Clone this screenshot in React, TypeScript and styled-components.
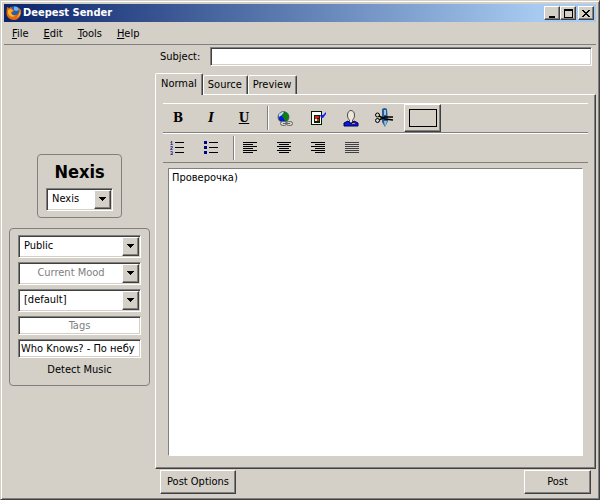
import React from "react";
import styled, { createGlobalStyle, css } from "styled-components";

const face = "#d4d0c8";
const shade = "#808080";
const dark = "#404040";
const uiFont = `"DejaVu Sans Condensed", "DejaVu Sans", sans-serif`;

const Global = createGlobalStyle`
  * { box-sizing: border-box; }
  body { margin: 0; background: ${face}; }
  button, input, select, textarea { font: inherit; color: inherit; margin: 0; border-radius: 0; }
`;

const raised = css`
  border: 1px solid;
  border-color: #fff ${dark} ${dark} #fff;
  box-shadow: inset -1px -1px ${shade};
`;

const sunken = css`
  border: 1px solid;
  border-color: ${shade} #fff #fff ${shade};
  box-shadow: inset 1px 1px ${dark}, inset -1px -1px ${face};
`;

const Window = styled.div`
  display: flex;
  flex-direction: column;
  min-height: 100vh;
  padding: 2px;
  background: ${face};
  color: #000;
  font: 11px/14px ${uiFont};
  border: 1px solid;
  border-color: ${face} ${dark} ${dark} ${face};
  box-shadow: inset 1px 1px #fff, inset -1px -1px ${shade};
`;

const TitleBar = styled.header`
  display: flex;
  align-items: center;
  height: 18px;
  margin: 1px 1px 0;
  padding: 0 2px;
  background: linear-gradient(to right, #0a246a, #a6caf0 90%);
`;

const Title = styled.h1`
  flex: 1;
  margin: 0 0 0 1px;
  color: #fff;
  font-size: 11px;
  line-height: 16px;
  font-weight: bold;
`;

const CaptionButton = styled.button<{ $apart?: boolean }>`
  ${raised}
  display: grid;
  place-items: center;
  width: 16px;
  height: 14px;
  padding: 0;
  background: ${face};
  margin-left: ${(p) => (p.$apart ? 2 : 0)}px;
`;

const MenuBar = styled.nav`
  display: flex;
  align-items: center;
  gap: 15px;
  height: 23px;
  margin: 0 1px;
  padding: 2px 8px 0;
  border-bottom: 1px solid ${shade};
`;

const MenuItem = styled.button`
  padding: 0;
  border: 0;
  background: none;
`;

const Body = styled.div`
  display: flex;
  flex: 1;
`;

const Sidebar = styled.aside`
  display: flex;
  flex-direction: column;
  align-items: center;
  justify-content: center;
  gap: 10px;
  width: 152px;
  padding-bottom: 3px;
  padding-left: 1px;
`;

const Group = styled.section<{ $wide?: boolean }>`
  display: flex;
  flex-direction: column;
  align-items: stretch;
  gap: 4px;
  width: ${(p) => (p.$wide ? 141 : 85)}px;
  padding: ${(p) => (p.$wide ? "6px 8px 7px" : "5px 8px 6px")};
  border: 1px solid ${shade};
  border-radius: 4px;
`;

const Account = styled.h2`
  margin: 0;
  font: bold 18px/24px ${uiFont};
  text-align: center;
`;

const Combo = styled.div`
  ${sunken}
  display: flex;
  position: relative;
  height: 23px;
  padding: 1px;
  background: #fff;
`;

const Select = styled.select`
  flex: 1;
  min-width: 0;
  padding: 0 20px 0 4px;
  border: 0;
  appearance: none;
  background: transparent;
`;

const ComboInput = styled.input`
  flex: 1;
  min-width: 0;
  padding: 0;
  border: 0;
  text-align: center;
  background: transparent;
  &::placeholder { color: ${shade}; opacity: 1; }
`;

const Arrow = styled.span`
  ${raised}
  position: absolute;
  top: 1px;
  right: 1px;
  bottom: 1px;
  display: grid;
  place-items: center;
  width: 17px;
  background: ${face};
  pointer-events: none;
`;

const ArrowButton = styled.button`
  ${raised}
  display: grid;
  place-items: center;
  width: 17px;
  padding: 0;
  background: ${face};
`;

const TextField = styled.input<{ $centered?: boolean }>`
  ${sunken}
  width: 100%;
  min-width: 0;
  height: 19px;
  padding: 0 2px;
  background: #fff;
  text-align: ${(p) => (p.$centered ? "center" : "left")};
  &::placeholder { color: ${shade}; opacity: 1; }
`;

const DetectButton = styled.button`
  align-self: center;
  padding: 0;
  margin: 1px 0;
  border: 0;
  background: none;
`;

const Main = styled.main`
  display: flex;
  flex: 1;
  flex-direction: column;
  min-width: 0;
  padding: 2px 1px 3px 0;
`;

const SubjectRow = styled.div`
  display: flex;
  align-items: center;
  padding: 0 4px 0 5px;
`;

const SubjectLabel = styled.label`
  flex: none;
  width: 50px;
`;

const Tabs = styled.div`
  display: flex;
  align-items: flex-end;
  margin-top: 7px;
`;

const Tab = styled.button<{ $active?: boolean }>`
  position: relative;
  z-index: ${(p) => (p.$active ? 1 : 0)};
  height: ${(p) => (p.$active ? 22 : 19)}px;
  padding: ${(p) => (p.$active ? "0 5px 2px" : "0 5px 0 4px")};
  margin-bottom: ${(p) => (p.$active ? -1 : 0)}px;
  background: ${face};
  border: 1px solid;
  border-color: #fff ${dark} transparent #fff;
  border-bottom-width: 0;
  border-radius: 2px 2px 0 0;
  box-shadow: inset -1px 0 ${shade};
`;

const Panel = styled.div`
  display: flex;
  flex: 1;
  flex-direction: column;
  padding: 8px 7px 12px;
  ${raised}
`;

const Toolbar = styled.div`
  display: flex;
  align-items: center;
  height: 30px;
  border-top: 1px solid #fff;
  border-bottom: 1px solid ${shade};
`;

const Tool = styled.button<{ $narrow?: boolean }>`
  display: grid;
  flex: none;
  place-items: center;
  width: ${(p) => (p.$narrow ? 28 : 30)}px;
  height: 26px;
  margin-right: ${(p) => (p.$narrow ? 6 : 3)}px;
  padding: 0;
  border: 0;
  background: none;
`;

const Glyph = styled.span<{ $italic?: boolean; $underline?: boolean }>`
  font: bold 12px/14px "DejaVu Serif", serif;
  font-style: ${(p) => (p.$italic ? "italic" : "normal")};
  text-decoration: ${(p) => (p.$underline ? "underline" : "none")};
`;

const Separator = styled.span<{ $narrow?: boolean }>`
  width: 2px;
  height: 24px;
  margin: 0 1px 0 ${(p) => (p.$narrow ? 2 : 5)}px;
  border-left: 1px solid ${shade};
  border-right: 1px solid #fff;
`;

const ColorButton = styled.button`
  ${raised}
  display: grid;
  place-items: center;
  width: 37px;
  height: 28px;
  margin-left: 2px;
  padding: 0;
  background: ${face};
`;

const Swatch = styled.span`
  width: 28px;
  height: 18px;
  border: 1px solid #000;
`;

const Editor = styled.textarea`
  flex: 1;
  margin: 5px 5px 0;
  padding: 2px 3px;
  border: 1px solid;
  border-color: ${shade} #fff #fff ${shade};
  background: #fff;
  resize: none;
  outline: 0;
`;

const Footer = styled.footer`
  display: flex;
  justify-content: space-between;
  padding: 1px 5px 0;
`;

const PushButton = styled.button<{ $wide?: boolean }>`
  ${raised}
  width: ${(p) => (p.$wide ? 76 : 67)}px;
  height: 24px;
  padding: 0;
  background: ${face};
`;

const Drawing = styled.svg`
  display: block;
  flex: none;
`;

const Down = () => (
  <Drawing width="7" height="4" shapeRendering="crispEdges">
    <path d="M0 0h7v1H0zM1 1h5v1H1zM2 2h3v1H2zM3 3h1v1H3z" />
  </Drawing>
);

const Firefox = () => (
  <Drawing width="16" height="16" viewBox="0 0 16 16">
    <circle cx="8.5" cy="7" r="6" fill="#2860b0" />
    <path d="M8 2c3-1 5 1 5 3l-3 1-2-1z" fill="#69b8e8" />
    <path d="M1 2l2 1 2-1 1 2 2 1-1 2-2 1c1 3 5 3 7 1 2-2 1-4 0-6 2 0 2 1 2 2l1-1c1 6-2 11-7 11C3 15 0 11 .5 7z" fill="#e66a0c" />
    <path d="M2 5l3-1 2 2-2 1c0 3 3 4 5 3-3 3-7 2-8-2z" fill="#ffb52a" />
    <path d="M14 6c1 4-2 7-6 7 4 0 5-3 6-7z" fill="#ffd34d" />
  </Drawing>
);

const Numbered = () => (
  <Drawing width="14" height="16" shapeRendering="crispEdges">
    <g fill="#000080" fontFamily="Liberation Mono" fontSize="5" fontWeight="bold">
      <text x="0" y="5">1</text>
      <text x="0" y="10">2</text>
      <text x="0" y="15">3</text>
    </g>
    <path d="M5 2h9v1H5zM5 7h9v1H5zM5 12h9v1H5z" />
  </Drawing>
);

const Bulleted = () => (
  <Drawing width="14" height="16" shapeRendering="crispEdges">
    <path fill="#000080" d="M0 1h3v3H0zM0 6h3v3H0zM0 11h3v3H0z" />
    <path d="M5 2h9v1H5zM5 7h9v1H5zM5 12h9v1H5z" />
  </Drawing>
);

const shortLineStart: Record<string, number> = { left: 0, center: 2, right: 4, justify: 0 };

const Align = ({ kind }: { kind: string }) => (
  <Drawing width="14" height="12" shapeRendering="crispEdges" fill={kind === "justify" ? dark : "#000"}>
    {[0, 1, 2, 3, 4, 5].map((i) => {
      const short = i % 2 === 1;
      return (
        <rect
          key={i}
          x={short ? shortLineStart[kind] : 0}
          y={i * 2}
          width={short && kind !== "justify" ? 10 : 14}
          height="1"
        />
      );
    })}
  </Drawing>
);

const LinkIcon = () => (
  <Drawing width="16" height="17" viewBox="0 0 16 17">
    <circle cx="6.5" cy="7" r="5.5" fill="#0818e0" stroke="#707878" />
    <path d="M6 3l3-1 2 2 1 3-1 3-2 1-2-1V8L5 7z" fill="#0a8010" />
    <path d="M2 4l3-2 2 0-2 3-3 2z" fill="#c4dce4" />
    <path d="M1 8l2 3-1 0z" fill="#0a8010" />
    <rect x="3.5" y="11.5" width="6" height="4" rx="2" fill={face} stroke="#686868" />
    <rect x="9.5" y="11.5" width="6" height="4" rx="2" fill={face} stroke="#686868" />
    <path d="M6 13.5h7" stroke="#686868" />
  </Drawing>
);

const ImageIcon = () => (
  <Drawing width="16" height="16" viewBox="0 0 16 16">
    <path d="M1 1h11v14H1z" fill="#001c00" />
    <path d="M2 2h9v12H2z" fill="#fff" />
    <path d="M4 5h6v8H4z" fill="#002800" shapeRendering="crispEdges" />
    <path d="M5 6h4v2H5zM7 9h2v2H7zM5 8h2v1H5z" fill="#f01818" shapeRendering="crispEdges" />
    <path d="M5 9h2v2H5z" fill="#e8f0e8" shapeRendering="crispEdges" />
    <path d="M10 5l3 0 3-3v2l-3 4h-2z" fill="#1020e8" />
  </Drawing>
);

const UserIcon = () => (
  <Drawing width="16" height="17" viewBox="0 0 16 17">
    <path d="M4.500 5c0-6 7-6 7 0 0 3-1 4-2 5v3h-3v-3c-1-1-2-2-2-5z" fill="#ece8dc" stroke="#4a4a4a" />
    <path d="M1 16v-3l4-2 2 2h2l2-2 4 2v3z" fill="#0818e0" stroke="#000048" />
    <path d="M9 13h3v1H9z" fill="#f08020" />
  </Drawing>
);

const CutIcon = () => (
  <Drawing width="20" height="20" viewBox="0 0 20 20">
    <path d="M8 1q3-2 5 0l1 12-3 6-3-5z" fill="#285c94" />
    <path d="M10 2h2v5h-2zM10 13l3 0-2 6z" fill="#9cc4dc" />
    <path d="M5 8l6 3 8 1M5 12l6-3 8 0" stroke="#000" strokeWidth="1.500" fill="none" />
    <circle cx="3.500" cy="7" r="2" fill={face} stroke="#000" />
    <circle cx="3.500" cy="12.500" r="2" fill={face} stroke="#000" />
  </Drawing>
);

const menus = ["File", "Edit", "Tools", "Help"];

export default function App() {
  return (
    <>
      <Global />
      <Window>
        <TitleBar>
          <Firefox />
          <Title>Deepest Sender</Title>
          <CaptionButton aria-label="Minimize">
            <Drawing width="10" height="9"><path d="M2 7h6v2H2z" /></Drawing>
          </CaptionButton>
          <CaptionButton aria-label="Maximize">
            <Drawing width="9" height="9" shapeRendering="crispEdges"><path d="M0 0h9v9H0zM1 2v6h7V2z" fillRule="evenodd" /></Drawing>
          </CaptionButton>
          <CaptionButton aria-label="Close" $apart>
            <Drawing width="8" height="7" shapeRendering="crispEdges">
              <path d="M0 0h2v1H0zM6 0h2v1H6zM1 1h2v1H1zM5 1h2v1H5zM2 2h4v1H2zM3 3h2v1H3zM2 4h4v1H2zM1 5h2v1H1zM5 5h2v1H5zM0 6h2v1H0zM6 6h2v1H6z" />
            </Drawing>
          </CaptionButton>
        </TitleBar>
        <MenuBar>
          {menus.map((m) => (
            <MenuItem key={m}><u>{m[0]}</u>{m.slice(1)}</MenuItem>
          ))}
        </MenuBar>
        <Body>
          <Sidebar>
            <Group>
              <Account>Nexis</Account>
              <Combo>
                <Select aria-label="Account"><option>Nexis</option></Select>
                <Arrow><Down /></Arrow>
              </Combo>
            </Group>
            <Group $wide>
              <Combo>
                <Select aria-label="Security"><option>Public</option></Select>
                <Arrow><Down /></Arrow>
              </Combo>
              <Combo>
                <ComboInput aria-label="Current Mood" placeholder="Current Mood" />
                <ArrowButton aria-label="Show moods"><Down /></ArrowButton>
              </Combo>
              <Combo>
                <Select aria-label="Picture"><option>[default]</option></Select>
                <Arrow><Down /></Arrow>
              </Combo>
              <TextField aria-label="Tags" placeholder="Tags" $centered />
              <TextField aria-label="Current Music" defaultValue="Who Knows? - По небу" />
              <DetectButton>Detect Music</DetectButton>
            </Group>
          </Sidebar>
          <Main>
            <SubjectRow>
              <SubjectLabel htmlFor="subject">Subject:</SubjectLabel>
              <TextField id="subject" />
            </SubjectRow>
            <Tabs role="tablist">
              <Tab role="tab" aria-selected $active>Normal</Tab>
              <Tab role="tab">Source</Tab>
              <Tab role="tab">Preview</Tab>
            </Tabs>
            <Panel role="tabpanel">
              <Toolbar>
                <Tool aria-label="Bold"><Glyph>B</Glyph></Tool>
                <Tool aria-label="Italic"><Glyph $italic>I</Glyph></Tool>
                <Tool aria-label="Underline"><Glyph $underline>U</Glyph></Tool>
                <Separator />
                <Tool aria-label="Link"><LinkIcon /></Tool>
                <Tool aria-label="Image"><ImageIcon /></Tool>
                <Tool aria-label="User"><UserIcon /></Tool>
                <Tool aria-label="Cut"><CutIcon /></Tool>
                <ColorButton aria-label="Text color"><Swatch /></ColorButton>
              </Toolbar>
              <Toolbar>
                <Tool $narrow aria-label="Numbered list"><Numbered /></Tool>
                <Tool $narrow aria-label="Bulleted list"><Bulleted /></Tool>
                <Separator $narrow />
                {Object.keys(shortLineStart).map((k) => (
                  <Tool $narrow key={k} aria-label={`Align ${k}`}><Align kind={k} /></Tool>
                ))}
              </Toolbar>
              <Editor aria-label="Entry" defaultValue="Проверочка)" />
            </Panel>
            <Footer>
              <PushButton $wide>Post Options</PushButton>
              <PushButton>Post</PushButton>
            </Footer>
          </Main>
        </Body>
      </Window>
    </>
  );
}
